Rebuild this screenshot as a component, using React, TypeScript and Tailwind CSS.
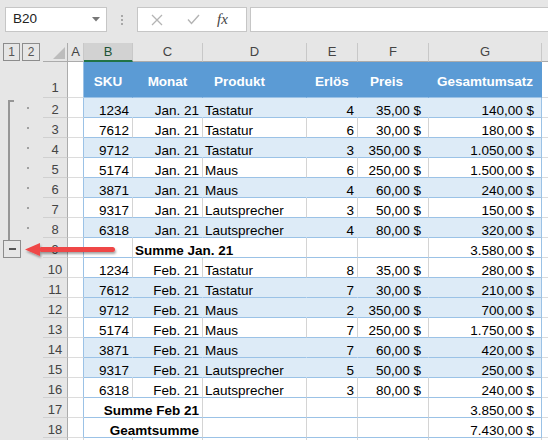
import React from 'react';

type DataRow = {
  n: number;
  band: boolean;
  sku: string;
  month: string;
  product: string;
  qty: string;
  price: string;
  total: string;
};

const janRows: DataRow[] = [
  { n: 2, band: true, sku: '1234', month: 'Jan. 21', product: 'Tastatur', qty: '4', price: '35,00 $', total: '140,00 $' },
  { n: 3, band: false, sku: '7612', month: 'Jan. 21', product: 'Tastatur', qty: '6', price: '30,00 $', total: '180,00 $' },
  { n: 4, band: true, sku: '9712', month: 'Jan. 21', product: 'Tastatur', qty: '3', price: '350,00 $', total: '1.050,00 $' },
  { n: 5, band: false, sku: '5174', month: 'Jan. 21', product: 'Maus', qty: '6', price: '250,00 $', total: '1.500,00 $' },
  { n: 6, band: true, sku: '3871', month: 'Jan. 21', product: 'Maus', qty: '4', price: '60,00 $', total: '240,00 $' },
  { n: 7, band: false, sku: '9317', month: 'Jan. 21', product: 'Lautsprecher', qty: '3', price: '50,00 $', total: '150,00 $' },
  { n: 8, band: true, sku: '6318', month: 'Jan. 21', product: 'Lautsprecher', qty: '4', price: '80,00 $', total: '320,00 $' },
];

const febRows: DataRow[] = [
  { n: 10, band: false, sku: '1234', month: 'Feb. 21', product: 'Tastatur', qty: '8', price: '35,00 $', total: '280,00 $' },
  { n: 11, band: true, sku: '7612', month: 'Feb. 21', product: 'Tastatur', qty: '7', price: '30,00 $', total: '210,00 $' },
  { n: 12, band: true, sku: '9712', month: 'Feb. 21', product: 'Maus', qty: '2', price: '350,00 $', total: '700,00 $' },
  { n: 13, band: false, sku: '5174', month: 'Feb. 21', product: 'Maus', qty: '7', price: '250,00 $', total: '1.750,00 $' },
  { n: 14, band: true, sku: '3871', month: 'Feb. 21', product: 'Maus', qty: '7', price: '60,00 $', total: '420,00 $' },
  { n: 15, band: true, sku: '9317', month: 'Feb. 21', product: 'Lautsprecher', qty: '5', price: '50,00 $', total: '250,00 $' },
  { n: 16, band: false, sku: '6318', month: 'Feb. 21', product: 'Lautsprecher', qty: '3', price: '80,00 $', total: '240,00 $' },
];

// shared cell look: gridline on the right, table border below
const cell = 'shrink-0 h-full border-r border-b border-b-[#9bc2e6] whitespace-nowrap pt-[4px] leading-[17px]';

function RowHead({ n, tall }: { n?: number; tall?: boolean }) {
  return (
    <div
      className={`w-[25px] shrink-0 h-full border-r border-r-[#acacac] border-b border-b-[#d0d0d0] text-center text-[13px] leading-[17px] text-[#444] ${
        tall ? 'pt-[17px]' : 'pt-[3px]'
      }`}
    >
      {n}
    </div>
  );
}

function ColA({ table = true }: { table?: boolean }) {
  return (
    <div
      className={`w-[16px] shrink-0 h-full bg-white border-r border-b border-b-[#dcdcdc] ${
        table ? 'border-r-[#9bc2e6]' : 'border-r-[#d4d4d4]'
      }`}
    />
  );
}

function ColH() {
  return <div className="flex-1 h-full bg-white border-b border-b-[#dcdcdc]" />;
}

function Row({ r }: { r: DataRow }) {
  const bg = r.band ? 'bg-[#ddebf7]' : 'bg-white';
  const v = r.band ? 'border-r-transparent' : 'border-r-[#d4d4d4]';
  return (
    <div className="flex h-[20px]">
      <RowHead n={r.n} />
      <ColA />
      <div className={`${cell} w-[49px] ${bg} ${v} pr-[3px] text-right`}>{r.sku}</div>
      <div className={`${cell} w-[70px] ${bg} ${v} pr-[3px] text-right`}>{r.month}</div>
      <div className={`${cell} w-[104px] ${bg} ${v} pl-[2px]`}>{r.product}</div>
      <div className={`${cell} w-[51px] ${bg} ${v} pr-[3px] text-right`}>{r.qty}</div>
      <div className={`${cell} w-[71px] ${bg} ${v} pr-[7px] text-right`}>{r.price}</div>
      <div className={`${cell} w-[113px] ${bg} border-r-[#9bc2e6] pr-[7px] text-right`}>{r.total}</div>
      <ColH />
    </div>
  );
}

function SumLeft({ n, label, total }: { n: number; label: string; total: string }) {
  return (
    <div className="flex h-[20px]">
      <RowHead n={n} />
      <ColA />
      <div className={`${cell} w-[49px] bg-white border-r-[#d4d4d4]`} />
      <div className={`${cell} w-[174px] bg-white border-r-[#d4d4d4] pl-[2px] font-bold`}>{label}</div>
      <div className={`${cell} w-[51px] bg-white border-r-[#d4d4d4]`} />
      <div className={`${cell} w-[71px] bg-white border-r-[#d4d4d4]`} />
      <div className={`${cell} w-[113px] bg-white border-r-[#9bc2e6] pr-[7px] text-right`}>{total}</div>
      <ColH />
    </div>
  );
}

function SumRight({ n, label, total }: { n: number; label: string; total: string }) {
  return (
    <div className="flex h-[20px]">
      <RowHead n={n} />
      <ColA />
      <div className={`${cell} w-[119px] bg-white border-r-[#d4d4d4] pr-[3px] text-right font-bold`}>{label}</div>
      <div className={`${cell} w-[104px] bg-white border-r-[#d4d4d4]`} />
      <div className={`${cell} w-[51px] bg-white border-r-[#d4d4d4]`} />
      <div className={`${cell} w-[71px] bg-white border-r-[#d4d4d4]`} />
      <div className={`${cell} w-[113px] bg-white border-r-[#9bc2e6] pr-[7px] text-right`}>{total}</div>
      <ColH />
    </div>
  );
}

// only a sliver of this row is on screen, so it carries no number
function EmptyRow() {
  const g = 'shrink-0 h-full bg-white border-r border-r-[#d4d4d4] border-b border-b-[#dcdcdc]';
  return (
    <div className="flex h-[20px]">
      <RowHead />
      <ColA table={false} />
      <div className={`${g} w-[49px]`} />
      <div className={`${g} w-[70px]`} />
      <div className={`${g} w-[104px]`} />
      <div className={`${g} w-[51px]`} />
      <div className={`${g} w-[71px]`} />
      <div className={`${g} w-[113px]`} />
      <ColH />
    </div>
  );
}

function ColumnHeaders() {
  const h = 'shrink-0 h-full border-r border-r-[#c8c8c8] border-b border-b-[#ababab] text-center text-[13px] leading-[18px] text-[#444]';
  return (
    <div className="flex h-[19px]">
      <div className="w-[25px] shrink-0 h-full border-r border-r-[#acacac] border-b border-b-[#ababab]">
        <svg width="24" height="18" viewBox="0 0 24 18">
          <polygon points="22,4 22,16 10,16" fill="#bdbdbd" />
        </svg>
      </div>
      <div className={`${h} w-[16px]`}>A</div>
      <div className="w-[49px] shrink-0 h-full bg-[#d2d2d2] border-r border-r-[#c8c8c8] border-b-2 border-b-[#217346] text-center text-[13px] leading-[18px] text-[#1f5436]">
        B
      </div>
      <div className={`${h} w-[70px]`}>C</div>
      <div className={`${h} w-[104px]`}>D</div>
      <div className={`${h} w-[51px]`}>E</div>
      <div className={`${h} w-[71px]`}>F</div>
      <div className={`${h} w-[113px]`}>G</div>
      <div className="flex-1 h-full border-b border-b-[#ababab]" />
    </div>
  );
}

function HeaderRow() {
  const c = 'shrink-0 h-full bg-[#5b9bd5] border-r border-r-transparent border-b border-b-[#9bc2e6] pt-[11px] leading-[17px] font-bold text-white whitespace-nowrap';
  return (
    <div className="flex h-[36px]">
      <RowHead n={1} tall />
      <ColA />
      <div className={`${c} w-[49px] text-center`}>SKU</div>
      <div className={`${c} w-[70px] text-center`}>Monat</div>
      <div className={`${c} w-[104px] pl-[11px]`}>Produkt</div>
      <div className={`${c} w-[51px] text-center`}>Erlös</div>
      <div className={`${c} w-[71px] pl-[12px]`}>Preis</div>
      <div className={`${c} w-[113px] border-r-[#9bc2e6] pr-[8px] text-right`}>Gesamtumsatz</div>
      <ColH />
    </div>
  );
}

function FormulaBar() {
  return (
    <div className="flex h-[43px] items-start pl-[5px] pt-[7px]">
      <div className="flex h-[25px] w-[102px] items-center border border-[#c6c6c6] bg-white pl-[7px] text-[13.5px] text-[#222]">
        <span>B20</span>
        <svg className="ml-auto mr-[6px]" width="8" height="5" viewBox="0 0 8 5">
          <polygon points="0,0 8,0 4,4.5" fill="#777" />
        </svg>
      </div>
      <div className="flex h-[25px] w-[30px] flex-col items-center justify-center gap-[2px]">
        <span className="h-[2px] w-[2px] bg-[#a8a8a8]" />
        <span className="h-[2px] w-[2px] bg-[#a8a8a8]" />
        <span className="h-[2px] w-[2px] bg-[#a8a8a8]" />
      </div>
      <div className="flex h-[25px] w-[110px] items-center border border-[#c6c6c6] bg-white">
        <svg className="ml-[13px]" width="12" height="12" viewBox="0 0 12 12">
          <path d="M1 1 L11 11 M11 1 L1 11" stroke="#b4b4b4" strokeWidth="1.3" fill="none" />
        </svg>
        <svg className="ml-[24px]" width="13" height="11" viewBox="0 0 13 11">
          <path d="M1 5.5 L4.5 9.5 L12 1" stroke="#b4b4b4" strokeWidth="1.4" fill="none" />
        </svg>
        <span className="ml-[17px] font-['Liberation_Serif',serif] text-[15px] italic leading-none text-[#444]">fx</span>
      </div>
      <div className="ml-[3px] h-[25px] flex-1 border border-r-0 border-[#c6c6c6] bg-white" />
    </div>
  );
}

function Gutter() {
  return (
    <div className="flex w-[43px] shrink-0 flex-col">
      <div className="flex h-[19px] gap-[2px] pl-[3px]">
        <div className="h-[18px] w-[17px] border border-[#8c8c8c] text-center text-[12px] leading-[16px] text-[#555]">1</div>
        <div className="h-[18px] w-[18px] border border-[#8c8c8c] text-center text-[12px] leading-[16px] text-[#555]">2</div>
      </div>
      <div className="h-[36px]" />
      <div className="flex h-[142px]">
        <div className="ml-[8px] mt-[2px] h-[140px] w-[6px] border-l-2 border-t-2 border-[#969696]" />
        <div className="ml-[13px] flex w-[2px] flex-col">
          {janRows.map((r) => (
            <div key={r.n} className="flex h-[20px] items-center">
              <span className="h-[2px] w-[2px] bg-[#a0a0a0]" />
            </div>
          ))}
        </div>
      </div>
      <div className="ml-[3px] flex h-[18px] w-[18px] items-center justify-center border border-[#8c8c8c]">
        <span className="h-[2px] w-[7px] bg-[#555]" />
      </div>
    </div>
  );
}

export default function App() {
  return (
    <div className="relative h-[440px] w-[548px] overflow-hidden bg-[#e6e6e6] font-['Liberation_Sans',Arial,sans-serif] text-[13.5px] text-black">
      <FormulaBar />
      <div className="flex">
        <Gutter />
        <div className="flex-1">
          <ColumnHeaders />
          <HeaderRow />
          {janRows.map((r) => (
            <Row key={r.n} r={r} />
          ))}
          <SumLeft n={9} label="Summe Jan. 21" total="3.580,00 $" />
          {febRows.map((r) => (
            <Row key={r.n} r={r} />
          ))}
          <SumRight n={17} label="Summe Feb 21" total="3.850,00 $" />
          <SumRight n={18} label="Geamtsumme" total="7.430,00 $" />
          <EmptyRow />
        </div>
      </div>

      {/* red pointer onto the collapse button */}
      <svg className="absolute left-[20px] top-[238px]" width="104" height="24" viewBox="0 0 104 24">
        <defs>
          <filter id="arrowShadow" x="-10%" y="-40%" width="125%" height="200%">
            <feDropShadow dx="1" dy="2" stdDeviation="1.3" floodColor="#000" floodOpacity="0.35" />
          </filter>
        </defs>
        <g filter="url(#arrowShadow)" fill="#ef4646">
          <polygon points="5,11.5 20,5 20,18" />
          <rect x="19" y="9" width="76" height="5" rx="2.5" />
        </g>
      </svg>
    </div>
  );
}
